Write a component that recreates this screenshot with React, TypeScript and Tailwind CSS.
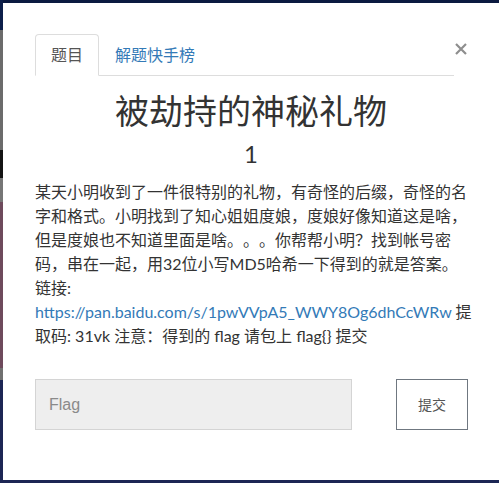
import React from "react";

const font = '"Lato", "Noto Sans CJK SC", "Noto Sans", sans-serif';

export default function App() {
  return (
    <div className="w-[499px] h-[483px] overflow-hidden bg-[#1c2654] flex">
      <div className="w-[3px] shrink-0 flex flex-col">
        <div className="h-[30px] bg-[#0d1f4a]" />
        <div className="h-[120px] bg-[#6b6b6b]" />
        <div className="h-[28px] bg-[#141414]" />
        <div className="h-[24px] bg-[#767676]" />
        <div className="h-[166px] bg-[#6e4a5c]" />
        <div className="h-[12px] bg-[#707070]" />
        <div className="flex-1 bg-[#1c2654]" />
      </div>
      <div className="w-[496px] shrink-0 min-w-0 flex flex-col">
        <div className="h-[3px] bg-[#0b1a40] shrink-0" />
        <div
          className="w-[496px] h-[477px] shrink-0 bg-white px-[32px] pt-[31px] text-[#333] overflow-hidden"
          style={{ fontFamily: font, textSpacingTrim: "space-all" } as React.CSSProperties}
        >
          <div className="flex items-start w-[432px]">
            <div className="flex-1 flex border-b border-[#ddd] h-[42px]">
              <div className="h-[42px] px-[15px] border border-[#ddd] border-b-white rounded-t-[4px] bg-white flex items-center text-[16px] text-[#555]">
                题目
              </div>
              <div className="h-[42px] px-[16px] flex items-center text-[16px] text-[#337ab7]">
                解题快手榜
              </div>
            </div>
            <div className="w-[13px] shrink-0 flex justify-center pt-[9px]">
              <svg width="12" height="12" viewBox="0 0 12 12">
                <path d="M1 1 L11 11 M11 1 L1 11" stroke="#8e8e8e" strokeWidth="2.2" />
              </svg>
            </div>
          </div>
          <div className="mt-[15px] text-center text-[34px] leading-[40px] text-[#333] w-[432px]">
            被劫持的神秘礼物
          </div>
          <div className="mt-[8px] text-center text-[24px] leading-[30px] text-[#333] w-[432px]">
            1
          </div>
          <div className="mt-[11px] text-[16px] leading-[24px] text-[#333] whitespace-nowrap">
            某天小明收到了一件很特别的礼物，有奇怪的后缀，奇怪的名
            <br />
            字和格式。小明找到了知心姐姐度娘，度娘好像知道这是啥，
            <br />
            但是度娘也不知道里面是啥。。。你帮帮小明？找到帐号密
            <br />
            码，串在一起，用32位小写MD5哈希一下得到的就是答案。
            <br />
            链接:
            <br />
            <span className="text-[#337ab7]">https://pan.baidu.com/s/1pwVVpA5_WWY8Og6dhCcWRw</span> 提
            <br />
            取码: 31vk 注意：得到的 flag 请包上 flag{"{}"} 提交
          </div>
          <div className="mt-[31px] flex justify-between w-[433px]">
            <div
              className="w-[317px] h-[51px] bg-[#eeeeee] border border-[#d4d4d4] flex items-center pl-[13px] text-[16px] text-[#8a8a8a]"
              style={{ fontFamily: '"Liberation Sans", Arial, sans-serif' }}
            >
              Flag
            </div>
            <div className="w-[72px] h-[51px] border border-[#6f7780] flex items-center justify-center text-[14px] text-[#555]">
              提交
            </div>
          </div>
        </div>
        <div className="flex-1" />
      </div>
    </div>
  );
}
